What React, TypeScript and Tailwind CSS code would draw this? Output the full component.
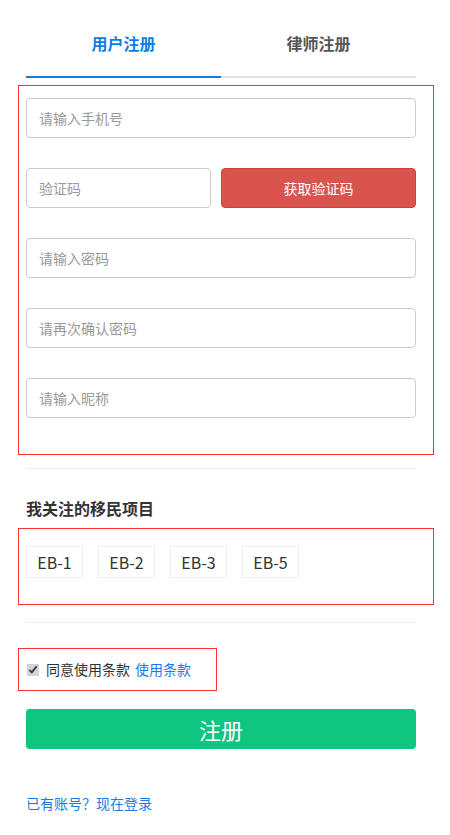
import React, { useState } from 'react';

const font = { fontFamily: '"Noto Sans CJK SC", "Microsoft YaHei", sans-serif' };

const tags = ['EB-1', 'EB-2', 'EB-3', 'EB-5'];

const App: React.FC = () => {
  const [tab, setTab] = useState<'user' | 'lawyer'>('user');
  const [agree, setAgree] = useState(true);

  return (
    <div className="w-[450px] min-h-[835px] bg-white font-['Noto_Sans_CJK_SC',sans-serif]">
      {/* Tabs */}
      <div className="ml-[26px] w-[390px] flex">
        <button
          onClick={() => setTab('user')}
          className={`flex-1 pt-[33px] pb-[23px] text-[16px] leading-[20px] font-bold border-b-2 ${
            tab === 'user' ? 'text-[#0b7de3] border-[#0b7de3]' : 'text-[#555] border-[#e2e2e2]'
          }`}
        >
          用户注册
        </button>
        <button
          onClick={() => setTab('lawyer')}
          className={`flex-1 pt-[33px] pb-[23px] text-[16px] leading-[20px] font-bold border-b-2 ${
            tab === 'lawyer' ? 'text-[#0b7de3] border-[#0b7de3]' : 'text-[#555] border-[#e2e2e2]'
          }`}
        >
          律师注册
        </button>
      </div>

      {/* Form fields */}
      <div className="mt-[7px] ml-[18px] w-[416px] border border-[#f33] pl-[7px] pr-[17px] pt-[12px] pb-[36px] flex flex-col gap-[30px]">
        <input
          placeholder="请输入手机号"
          className="h-[40px] w-full border border-[#ccc] rounded-[4px] px-[12px] text-[14px] text-[#333] placeholder:text-[#999] outline-none"
        />
        <div className="flex gap-[10px]">
          <input
            placeholder="验证码"
            className="h-[40px] w-[185px] border border-[#ccc] rounded-[4px] px-[12px] text-[14px] text-[#333] placeholder:text-[#999] outline-none"
          />
          <button className="h-[40px] flex-1 bg-[#d9534f] border border-[#d43f3a] rounded-[4px] text-white text-[14px]">
            获取验证码
          </button>
        </div>
        <input
          type="password"
          placeholder="请输入密码"
          className="h-[40px] w-full border border-[#ccc] rounded-[4px] px-[12px] text-[14px] text-[#333] placeholder:text-[#999] outline-none"
        />
        <input
          type="password"
          placeholder="请再次确认密码"
          className="h-[40px] w-full border border-[#ccc] rounded-[4px] px-[12px] text-[14px] text-[#333] placeholder:text-[#999] outline-none"
        />
        <input
          placeholder="请输入昵称"
          className="h-[40px] w-full border border-[#ccc] rounded-[4px] px-[12px] text-[14px] text-[#333] placeholder:text-[#999] outline-none"
        />
      </div>

      <div className="mt-[13px] ml-[26px] w-[390px] h-px bg-[#eee]" />

      {/* Projects */}
      <h3 className="mt-[28px] ml-[26px] text-[16px] leading-[22px] font-bold text-[#333]" style={font}>
        我关注的移民项目
      </h3>
      <div className="mt-[9px] ml-[18px] w-[416px] border border-[#f33] pl-[7px] pt-[17px] pb-[26px] flex gap-[15px]">
        {tags.map(t => (
          <div
            key={t}
            className="w-[57px] h-[32px] border border-[#eee] flex items-center justify-center text-[16px] text-[#333]"
          >
            {t}
          </div>
        ))}
      </div>

      <div className="mt-[17px] ml-[26px] w-[390px] h-px bg-[#eee]" />

      {/* Agreement */}
      <div className="mt-[25px] ml-[18px] w-[199px] h-[43px] border border-[#f33] flex items-center pl-[8px] text-[14px]">
        <input
          type="checkbox"
          checked={agree}
          onChange={e => setAgree(e.target.checked)}
          className="w-[12px] h-[12px] accent-[#d4d4d4]"
        />
        <span className="ml-[7px] text-[#333]">同意使用条款</span>
        <a className="ml-[5px] text-[#1a7ce2]">使用条款</a>
      </div>

      <button className="mt-[18px] ml-[26px] w-[390px] h-[40px] bg-[#10c57f] rounded-[4px] text-white text-[22px]">
        注册
      </button>

      <p className="mt-[45px] ml-[26px] text-[14px] leading-[18px] text-[#1a7ce2]">已有账号？现在登录</p>
    </div>
  );
};

export default App;
